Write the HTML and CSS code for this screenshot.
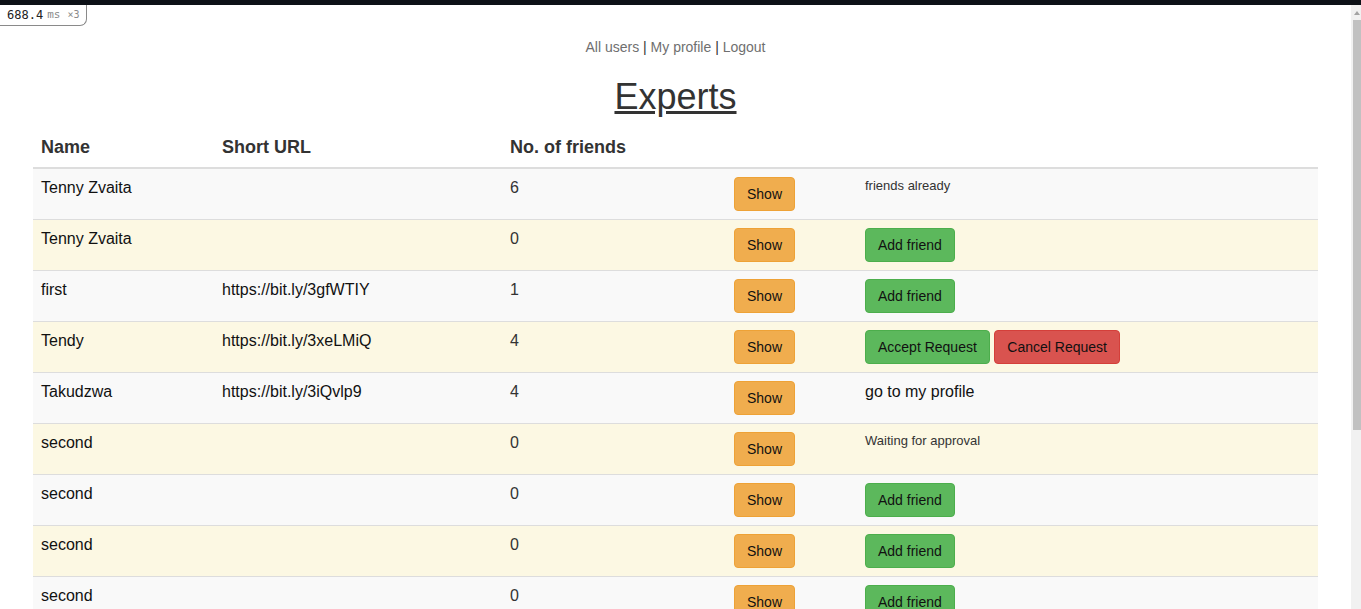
FILE: index.html
```html
<!DOCTYPE html>
<html lang="en">
<head>
<meta charset="utf-8">
<title>Experts</title>
<link rel="stylesheet" href="styles.css">
</head>
<body>
<div class="topbar"></div>
<div class="badge"><span class="badge-num">688.4</span><span class="badge-unit">ms</span><span class="badge-x">×3</span></div>
<div class="screen">
  <div class="viewport">
    <div class="container">
      <nav class="nav"><a href="#">All users</a> | <a href="#">My profile</a> | <a href="#">Logout</a></nav>
      <h1 class="title"><a href="#">Experts</a></h1>
      <table class="experts">
        <colgroup>
          <col class="c-name"><col class="c-url"><col class="c-count"><col class="c-show"><col class="c-action">
        </colgroup>
        <thead>
          <tr><th>Name</th><th>Short URL</th><th>No. of friends</th><th></th><th></th></tr>
        </thead>
        <tbody>
          <tr><td>Tenny Zvaita</td><td></td><td class="num">6</td><td><button class="btn warn">Show</button></td><td><small class="note">friends already</small></td></tr>
          <tr><td>Tenny Zvaita</td><td></td><td class="num">0</td><td><button class="btn warn">Show</button></td><td><button class="btn ok">Add friend</button></td></tr>
          <tr><td>first</td><td>https://bit.ly/3gfWTIY</td><td class="num">1</td><td><button class="btn warn">Show</button></td><td><button class="btn ok">Add friend</button></td></tr>
          <tr><td>Tendy</td><td>https://bit.ly/3xeLMiQ</td><td class="num">4</td><td><button class="btn warn">Show</button></td><td><button class="btn ok">Accept Request</button> <button class="btn bad">Cancel Request</button></td></tr>
          <tr><td>Takudzwa</td><td>https://bit.ly/3iQvlp9</td><td class="num">4</td><td><button class="btn warn">Show</button></td><td><a class="plain" href="#">go to my profile</a></td></tr>
          <tr><td>second</td><td></td><td class="num">0</td><td><button class="btn warn">Show</button></td><td><small class="note">Waiting for approval</small></td></tr>
          <tr><td>second</td><td></td><td class="num">0</td><td><button class="btn warn">Show</button></td><td><button class="btn ok">Add friend</button></td></tr>
          <tr><td>second</td><td></td><td class="num">0</td><td><button class="btn warn">Show</button></td><td><button class="btn ok">Add friend</button></td></tr>
          <tr><td>second</td><td></td><td class="num">0</td><td><button class="btn warn">Show</button></td><td><button class="btn ok">Add friend</button></td></tr>
          <tr><td>second</td><td></td><td class="num">0</td><td><button class="btn warn">Show</button></td><td><button class="btn ok">Add friend</button></td></tr>
          <tr><td>second</td><td></td><td class="num">0</td><td><button class="btn warn">Show</button></td><td><button class="btn ok">Add friend</button></td></tr>
          <tr><td>second</td><td></td><td class="num">0</td><td><button class="btn warn">Show</button></td><td><button class="btn ok">Add friend</button></td></tr>
          <tr><td>second</td><td></td><td class="num">0</td><td><button class="btn warn">Show</button></td><td><button class="btn ok">Add friend</button></td></tr>
        </tbody>
      </table>
    </div>
  </div>
  <div class="scrollbar">
    <div class="sb-arrow"></div>
    <div class="sb-thumb"></div>
  </div>
</div>
</body>
</html>
```
FILE: styles.css
```css
html, body {
  margin: 0;
  padding: 0;
  height: 100%;
  overflow: hidden;
  background: #fff;
}
body {
  font-family: "Liberation Sans", Arial, sans-serif;
  font-size: 14px;
  line-height: 20px;
  color: #333;
}
.topbar {
  height: 5px;
  background: #0d1117;
}
.badge {
  position: absolute;
  left: 0;
  top: 5px;
  height: 20px;
  padding: 0 7px;
  display: flex;
  align-items: center;
  gap: 4px;
  background: #fff;
  border: 1px solid #8a8a8a;
  border-top: none;
  border-left: none;
  border-bottom-right-radius: 7px;
  font-family: "DejaVu Sans Mono", monospace;
  z-index: 5;
}
.badge-num {
  font-size: 12px;
  color: #222;
}
.badge-unit {
  font-size: 11px;
  color: #8a8a8a;
}
.badge-x {
  font-size: 10px;
  color: #8a8a8a;
  margin-left: 3px;
}
.screen {
  display: flex;
  height: 604px;
}
.viewport {
  flex: 1;
  overflow: hidden;
}
.scrollbar {
  width: 10px;
  background: #f1f1f1;
  display: flex;
  flex-direction: column;
  align-items: flex-end;
}
.sb-arrow {
  width: 0;
  height: 0;
  margin: 6px 1px 5px 0;
  border-left: 3px solid transparent;
  border-right: 3px solid transparent;
  border-bottom: 4px solid #a3a3a3;
}
.sb-thumb {
  width: 8px;
  height: 410px;
  background: #c1c1c1;
}
.container {
  padding: 0 33px;
}
.nav {
  padding-top: 32px;
  text-align: center;
  line-height: 20px;
  color: #333;
}
.nav a {
  color: #6f6f6f;
  text-decoration: none;
}
.title {
  margin: 20px 0 10px;
  font-size: 36px;
  font-weight: 500;
  line-height: 1.1;
  text-align: center;
}
.title a {
  color: #333;
  text-decoration: underline;
}
.experts {
  width: 100%;
  border-collapse: collapse;
  margin-bottom: 20px;
  font-size: 16px;
}
.c-name { width: 181px; }
.c-url { width: 288px; }
.c-count { width: 224px; }
.c-show { width: 131px; }
.experts th {
  text-align: left;
  font-size: 18px;
  font-weight: bold;
  line-height: 24px;
  padding: 8px;
  color: #333;
  border-bottom: 2px solid #ddd;
}
.experts td {
  padding: 8px;
  vertical-align: top;
  line-height: 22px;
  color: #111;
  border-top: 1px solid #ddd;
}
.experts td.num {
  color: #333;
}
.experts tbody tr:nth-child(odd) td {
  background: #f9f9f9;
}
.experts tbody tr:nth-child(even) td {
  background: #fcf8e3;
}
.note {
  display: block;
  font-size: 13px;
  line-height: 18px;
  color: #333;
}
.plain {
  color: #111;
  text-decoration: none;
}
.btn {
  display: inline-block;
  margin: 0;
  padding: 6px 12px;
  font-family: "Liberation Sans", Arial, sans-serif;
  font-size: 14px;
  line-height: 20px;
  color: #111;
  border: 1px solid transparent;
  border-radius: 4px;
  vertical-align: top;
  cursor: pointer;
}
.btn.warn {
  background: #f0ad4e;
  border-color: #eea236;
}
.btn.ok {
  background: #5cb85c;
  border-color: #4cae4c;
}
.btn.bad {
  background: #d9534f;
  border-color: #d43f3a;
}
```
